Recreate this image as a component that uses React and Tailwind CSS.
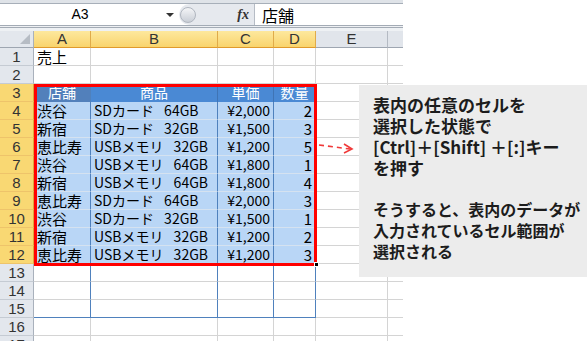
import React from "react";

const rows = [
  ["渋谷", "SDカード\u2002 64GB", "¥2,000", "2"],
  ["新宿", "SDカード\u2002 32GB", "¥1,500", "3"],
  ["恵比寿", "USBメモリ\u2002 32GB", "¥1,200", "5"],
  ["渋谷", "USBメモリ\u2002 64GB", "¥1,800", "1"],
  ["新宿", "USBメモリ\u2002 64GB", "¥1,800", "4"],
  ["恵比寿", "SDカード\u2002 64GB", "¥2,000", "3"],
  ["渋谷", "SDカード\u2002 32GB", "¥1,500", "1"],
  ["新宿", "USBメモリ\u2002 32GB", "¥1,200", "2"],
  ["恵比寿", "USBメモリ\u2002 32GB", "¥1,200", "3"],
];

const cellFont = { fontFamily: '"Noto Sans CJK JP", sans-serif' };
const hdrFont = { fontFamily: '"Liberation Sans", Arial, sans-serif' };

function RowHead({ n, selected }) {
  return (
    <div
      style={hdrFont}
      className={
        selected
          ? "w-[34px] shrink-0 flex items-center justify-center text-[15px] text-[#333] bg-[#f9d873] border-r border-b border-r-[#e0a43c] border-b-[#eec46a]"
          : "w-[34px] shrink-0 flex items-center justify-center text-[15px] text-[#333] bg-[#e3e7ed] border-r border-b border-r-[#a9b1bc] border-b-[#c5cbd3]"
      }
    >
      {n}
    </div>
  );
}

function Tail() {
  return (
    <>
      <div className="w-[72px] shrink-0 border-r border-b border-[#d4d4d4]" />
      <div className="w-[15px] shrink-0 border-b border-[#d4d4d4]" />
    </>
  );
}

function PlainRow({ n, children }) {
  return (
    <div className="flex h-[18px]">
      <RowHead n={n} />
      {children || (
        <>
          <div className="w-[57px] shrink-0 border-r border-b border-[#d4d4d4]" />
          <div className="w-[127px] shrink-0 border-r border-b border-[#d4d4d4]" />
          <div className="w-[56px] shrink-0 border-r border-b border-[#d4d4d4]" />
          <div className="w-[42px] shrink-0 border-r border-b border-[#d4d4d4]" />
        </>
      )}
      <Tail />
    </div>
  );
}

function EmptyTableRow({ n, last }) {
  const b = last ? "border-b-[#4f81bd]" : "border-b-[#d4d4d4]";
  return (
    <div className="flex h-[18px]">
      <RowHead n={n} />
      <div className={`w-[57px] shrink-0 border-r border-b border-r-[#4f81bd] ${b}`} />
      <div className={`w-[127px] shrink-0 border-r border-b border-r-[#4f81bd] ${b}`} />
      <div className={`w-[56px] shrink-0 border-r border-b border-r-[#4f81bd] ${b}`} />
      <div className={`w-[42px] shrink-0 border-r border-b border-r-[#4f81bd] ${b}`} />
      <Tail />
    </div>
  );
}

export default function App() {
  return (
    <div className="relative w-[587px] h-[341px] overflow-hidden bg-white">
      <div className="w-[403px]">
        {/* top strip */}
        <div className="h-[4px] bg-[#dfe3e8] border-b border-[#a7afb9]" />
        {/* formula bar */}
        <div className="flex h-[21px] bg-white">
          <div
            style={hdrFont}
            className="w-[160px] flex items-center justify-center text-[14px] text-black"
          >
            A3
          </div>
          <div className="w-[19px] flex items-center justify-center">
            <div className="w-0 h-0 border-l-[4px] border-r-[4px] border-t-[4px] border-l-transparent border-r-transparent border-t-[#333]" />
          </div>
          <div className="w-[76px] flex items-center bg-[#e6e9ee] rounded-l-full border-r border-[#b6bcc5]">
            <div className="w-[16px] h-[16px] ml-[1px] rounded-full bg-gradient-to-b from-[#f4f5f7] to-[#c9ced6] border border-[#b0b6bf]" />
            <span
              style={{ fontFamily: '"Liberation Serif", serif' }}
              className="ml-auto mr-[5px] text-[14px] italic font-bold text-[#333]"
            >
              fx
            </span>
          </div>
          <div
            style={cellFont}
            className="pl-[7px] flex items-center text-[16px] text-black leading-none"
          >
            店舗
          </div>
        </div>
        <div className="h-[3px] border-t border-b border-[#a3abb5] bg-[#eef0f3]" />
        <div className="h-[3px] bg-[#eef1f4]" />

        {/* column headers */}
        <div className="flex h-[17px]" style={hdrFont}>
          <div className="w-[34px] shrink-0 relative bg-[#e3e7ed] border-r border-b border-r-[#a9b1bc] border-b-[#9ea6b1]">
            <svg className="absolute right-[3px] bottom-[3px]" width="10" height="10">
              <polygon points="10,0 10,10 0,10" fill="#b6bcc4" />
            </svg>
          </div>
          {[["A", "w-[57px]"], ["B", "w-[127px]"], ["C", "w-[56px]"], ["D", "w-[42px]"]].map(([l, w]) => (
            <div
              key={l}
              className={`${w} shrink-0 flex items-center justify-center text-[15px] text-[#333] bg-gradient-to-b from-[#fde89d] to-[#f9d46c] border-r border-b border-r-[#e0ab4a] border-b-[#e09a2c]`}
            >
              {l}
            </div>
          ))}
          <div className="w-[72px] shrink-0 flex items-center justify-center text-[15px] text-[#333] bg-[#e1e5eb] border-r border-b border-r-[#b4bac3] border-b-[#9ea6b1]">
            E
          </div>
          <div className="w-[15px] shrink-0 bg-[#e1e5eb] border-b border-[#9ea6b1]" />
        </div>

        {/* rows */}
        <div style={cellFont} className="text-[14px] leading-[17px] text-black">
          <PlainRow n={1}>
            <div className="w-[57px] shrink-0 pl-[3px] text-[15px] border-r border-b border-[#d4d4d4]">売上</div>
            <div className="w-[127px] shrink-0 border-r border-b border-[#d4d4d4]" />
            <div className="w-[56px] shrink-0 border-r border-b border-[#d4d4d4]" />
            <div className="w-[42px] shrink-0 border-r border-b border-[#d4d4d4]" />
          </PlainRow>
          <PlainRow n={2} />

          {/* header row 3 */}
          <div className="flex h-[18px]">
            <RowHead n={3} selected />
            <div className="w-[57px] shrink-0 flex justify-center text-white bg-[#5280bb] border-r border-r-[#4f81bd]">店舗</div>
            <div className="w-[127px] shrink-0 flex justify-center text-white bg-[#4a89d4] border-r border-r-[#3f74b5]">商品</div>
            <div className="w-[56px] shrink-0 flex justify-center text-white bg-[#4a89d4] border-r border-r-[#3f74b5]">単価</div>
            <div className="w-[42px] shrink-0 flex justify-center text-white bg-[#4a89d4] border-r border-r-[#3f74b5]">数量</div>
            <Tail />
          </div>

          {rows.map((r, i) => (
            <div key={i} className="flex h-[18px]">
              <RowHead n={i + 4} selected />
              <div className="w-[57px] shrink-0 pl-[3px] text-[15px] bg-[#b9d6f6] border-r border-b border-r-[#4f81bd] border-b-[#d5e2f0] whitespace-nowrap">{r[0]}</div>
              <div className="w-[127px] shrink-0 pl-[3px] bg-[#b9d6f6] border-r border-b border-r-[#4f81bd] border-b-[#d5e2f0] whitespace-pre">{r[1]}</div>
              <div className="w-[56px] shrink-0 pr-[3px] text-right bg-[#b9d6f6] border-r border-b border-r-[#4f81bd] border-b-[#d5e2f0] whitespace-nowrap">{r[2]}</div>
              <div className="w-[42px] shrink-0 pr-[3px] text-right text-[15px] bg-[#b9d6f6] border-r border-b border-r-[#4f81bd] border-b-[#d5e2f0] whitespace-nowrap">{r[3]}</div>
              <Tail />
            </div>
          ))}

          <EmptyTableRow n={13} />
          <EmptyTableRow n={14} />
          <EmptyTableRow n={15} last />
          <PlainRow n={16} />
          <PlainRow n={17} />
        </div>
      </div>

      {/* selection border */}
      <div className="absolute left-[34px] top-[84px] w-[283px] h-[182px] border-[3px] border-[#ff0000] pointer-events-none" />
      <div className="absolute left-[314px] top-[262px] w-[5px] h-[5px] bg-black border border-white" />

      {/* arrow */}
      <svg className="absolute left-[316px] top-[138px]" width="44" height="20">
        <line x1="3" y1="7" x2="34" y2="11" stroke="#f03a3a" strokeWidth="1.6" strokeDasharray="5 4" />
        <polyline points="28,6 36,11 28,15" fill="none" stroke="#f03a3a" strokeWidth="1.6" />
      </svg>

      {/* callout */}
      <div
        style={cellFont}
        className="absolute left-[359px] top-[85px] w-[228px] h-[192px] bg-[#ececec] pl-[14px] pt-[9px] leading-[21px] font-bold text-[#1c1c1c]"
      >
        <div className="text-[17px]">
          <p>表内の任意のセルを</p>
          <p>選択した状態で</p>
          <p className="whitespace-nowrap">[Ctrl]＋[Shift] ＋[:]キー</p>
          <p>を押す</p>
        </div>
        <div className="h-[21px]" />
        <div className="text-[16px]">
          <p className="whitespace-nowrap">そうすると、表内のデータが</p>
          <p className="whitespace-nowrap">入力されているセル範囲が</p>
          <p>選択される</p>
        </div>
      </div>
    </div>
  );
}
